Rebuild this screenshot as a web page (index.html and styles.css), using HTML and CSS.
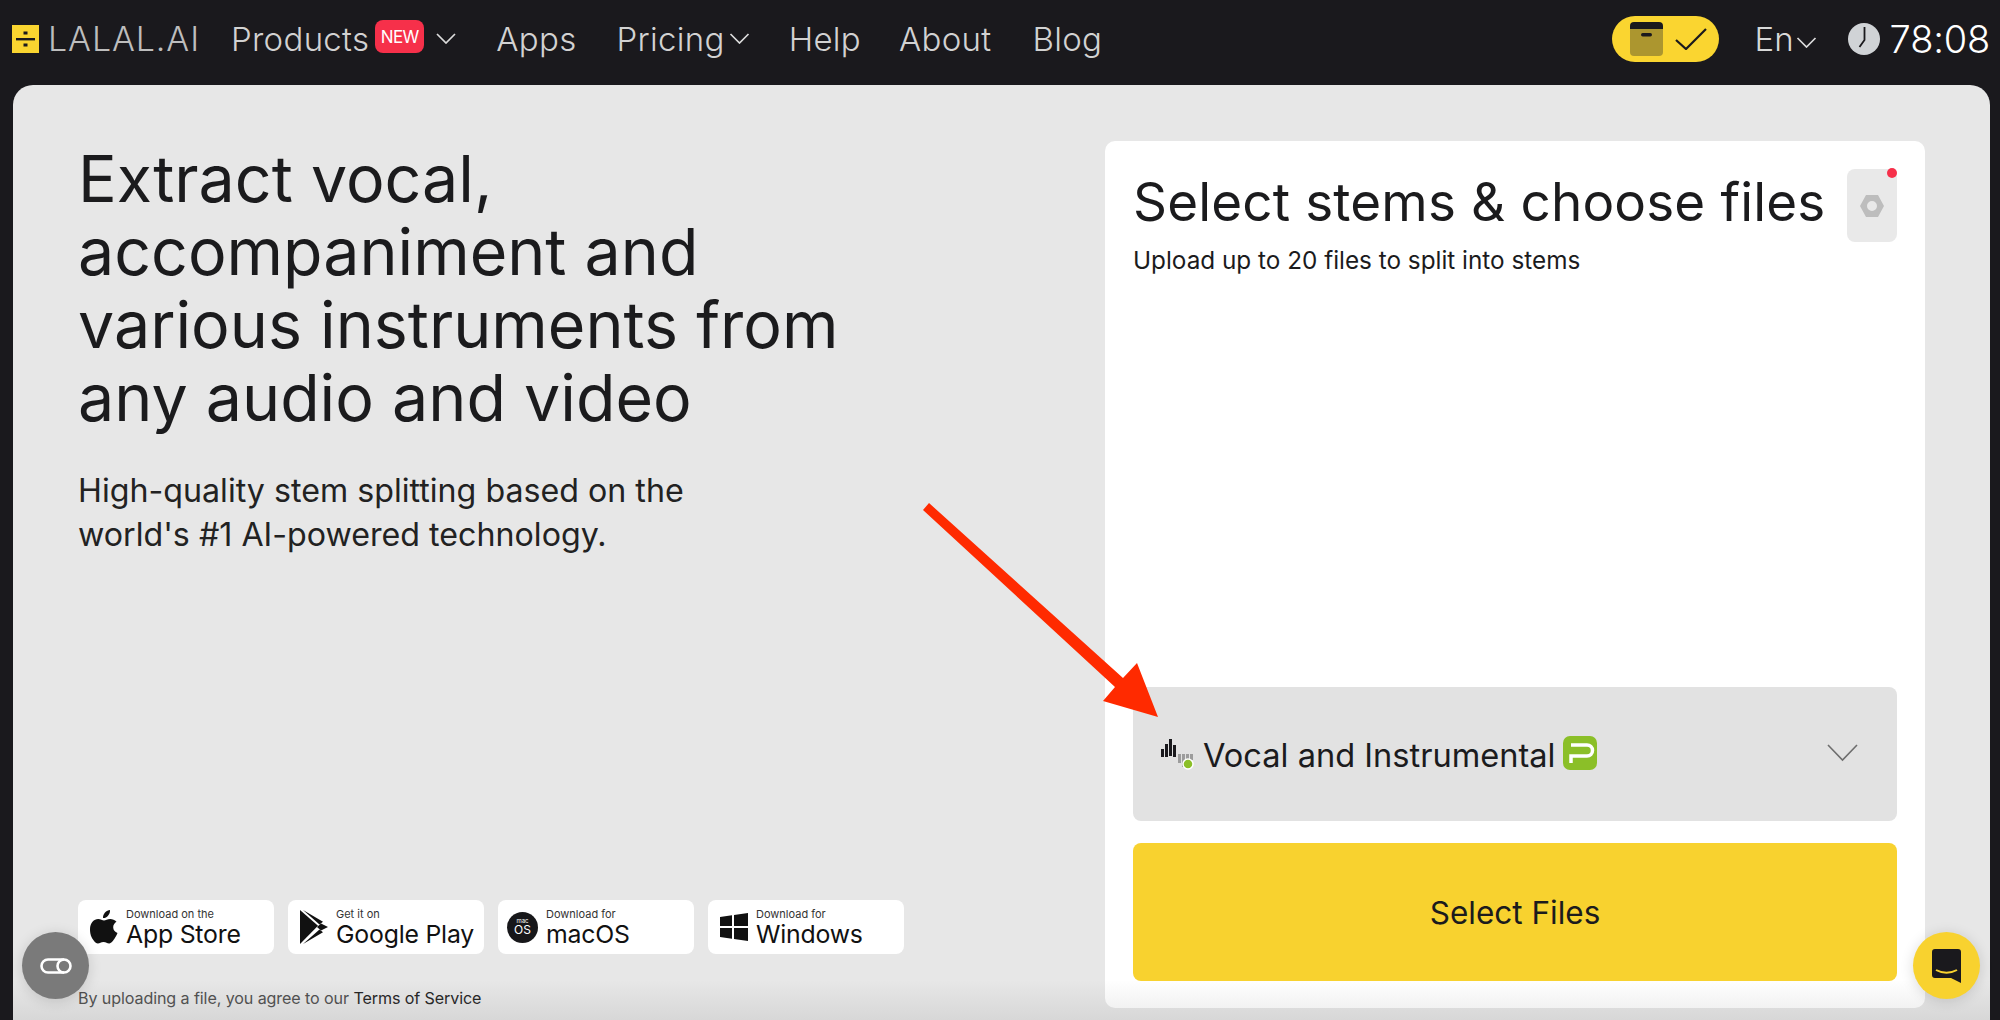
FILE: index.html
```html
<!DOCTYPE html>
<html lang="en">
<head>
<meta charset="utf-8">
<title>LALAL.AI</title>
<link rel="stylesheet" href="styles.css">
</head>
<body>
<header class="topbar">
  <nav class="nav-left">
    <a class="brand">
      <svg class="brand-mark" viewBox="0 0 27 28"><rect width="27" height="28" fill="#fad530"/><rect x="4" y="13" width="19" height="2.4" fill="#1a191d"/><rect x="11.5" y="6.5" width="4" height="3" fill="#1a191d"/><rect x="11.5" y="18.5" width="4" height="3" fill="#1a191d"/></svg>
      <span class="brand-name">LALAL.AI</span>
    </a>
    <a class="nav-item nav-products">Products<span class="badge-new">NEW</span>
      <svg class="chev chev-products" viewBox="0 0 20 11"><path d="M1 1l9 9 9-9" fill="none" stroke="#dcdcdc" stroke-width="1.7"/></svg></a>
    <a class="nav-item">Apps</a>
    <a class="nav-item nav-pricing">Pricing
      <svg class="chev chev-pricing" viewBox="0 0 20 11"><path d="M1 1l9 9 9-9" fill="none" stroke="#dcdcdc" stroke-width="1.7"/></svg></a>
    <a class="nav-item nav-help">Help</a>
    <a class="nav-item nav-about">About</a>
    <a class="nav-item">Blog</a>
  </nav>
  <div class="nav-right">
    <div class="pill">
      <svg class="pill-box" viewBox="0 0 33 34"><path d="M4 0h25a4 4 0 0 1 4 4v3H0V4a4 4 0 0 1 4-4z" fill="#1a191d"/><path d="M0 7h33v23a4 4 0 0 1-4 4H4a4 4 0 0 1-4-4z" fill="#ac962f"/><rect x="11" y="11" width="11" height="3.5" rx="1.7" fill="#1a191d"/></svg>
      <svg class="pill-check" viewBox="0 0 32 22"><path d="M1 12l10 9L31 1" fill="none" stroke="#1a191d" stroke-width="2.2"/></svg>
    </div>
    <a class="lang">En<svg class="chev chev-lang" viewBox="0 0 20 11"><path d="M1 1l9 9 9-9" fill="none" stroke="#dcdcdc" stroke-width="1.7"/></svg></a>
    <svg class="clock" viewBox="0 0 32 32"><circle cx="16" cy="16" r="16" fill="#d0d3d6"/><path d="M16.5 4v13l-5 7" fill="none" stroke="#1a191d" stroke-width="1.8"/></svg>
    <span class="timer">78:08</span>
  </div>
</header>

<main class="panel">
  <section class="intro">
    <div>
      <h1 class="headline">Extract vocal, accompaniment and various instruments from any audio and video</h1>
      <p class="lead">High-quality stem splitting based on the world's #1 AI-powered technology.</p>
    </div>
    <div class="intro-foot">
      <div class="stores">
        <a class="store">
          <svg class="store-icon" viewBox="0 0 28 34"><path d="M20 0c.2 2.300-.7 4.300-2 5.700-1.300 1.500-3.200 2.500-5 2.300-.2-2.100.8-4.200 2-5.600C16.300 1 18.400.1 20 0zM26.500 11.700c-2 1.300-3.300 3.200-3.300 5.500 0 2.700 1.700 4.800 4.300 5.800-.6 1.800-1.500 3.500-2.600 5.100-1.600 2.300-3.200 5.300-5.700 5.300-2.300 0-3-1.400-5.700-1.400s-3.500 1.400-5.700 1.400c-2.400 0-4.100-2.800-5.700-5.200C.2 25 0 21.500 0 19.300c0-6.300 4-10.200 8.200-10.200 2.400 0 4.200 1.500 5.800 1.500 1.500 0 3.500-1.600 6.300-1.600 2.100 0 4.500.9 6.200 2.700z" fill="#111"/></svg>
          <span class="store-text"><small class="store-small">Download on the</small><strong class="store-big">App Store</strong></span>
        </a>
        <a class="store">
          <svg class="store-icon" viewBox="0 0 28 34"><path d="M0 0l18 15.800L0 34z" fill="#111"/><path d="M3 0l16.500 14.500 3.500-2.800zM3 34l16.500-14.500 3.500 2.800z" fill="#111"/><path d="M21 13.500l7 3.500-7 3.500-4-3.500z" fill="#111"/></svg>
          <span class="store-text"><small class="store-small">Get it on</small><strong class="store-big">Google Play</strong></span>
        </a>
        <a class="store">
          <span class="macos"><span class="macos-top">mac</span><span class="macos-os">OS</span></span>
          <span class="store-text"><small class="store-small">Download for</small><strong class="store-big">macOS</strong></span>
        </a>
        <a class="store">
          <svg class="store-icon" viewBox="0 0 28 28"><path d="M0 4l12-1.700V13H0zM14 2l14-2v13H14zM0 15h12v10.700L0 24zM14 15h14v13l-14-2z" fill="#111"/></svg>
          <span class="store-text"><small class="store-small">Download for</small><strong class="store-big">Windows</strong></span>
        </a>
      </div>
      <p class="terms">By uploading a file, you agree to our <a class="terms-link">Terms of Service</a></p>
    </div>
  </section>

  <section class="card">
    <div class="card-head">
      <div>
        <h2 class="card-title">Select stems &amp; choose files</h2>
        <p class="card-sub">Upload up to 20 files to split into stems</p>
      </div>
      <button class="settings">
        <svg class="settings-icon" viewBox="0 0 24 22"><path fill-rule="evenodd" d="M6 0h12l6 11-6 11H6L0 11zM12 6a5 5 0 1 0 0 10 5 5 0 0 0 0-10z" fill="#bdbdbd"/></svg>
        <span class="settings-dot"></span>
      </button>
    </div>
    <div class="card-space"></div>
    <div class="stem-select">
      <svg class="stem-icon" viewBox="0 0 33 32"><g fill="#1a191d"><rect x="0" y="11" width="3" height="8"/><rect x="4" y="6" width="3" height="13"/><rect x="8" y="1" width="3" height="17"/><rect x="12" y="7" width="3" height="12"/></g><g fill="#9c9c9c"><rect x="17" y="16" width="3" height="9"/><rect x="21" y="16" width="3" height="13"/><rect x="25" y="16" width="3" height="7"/><rect x="29" y="16" width="3" height="6"/></g><circle cx="27" cy="26" r="5" fill="#8bbf28" stroke="#fff" stroke-width="1.500"/></svg>
      <span class="stem-label">Vocal and Instrumental</span>
      <svg class="stem-badge" viewBox="0 0 34 34"><rect width="34" height="34" rx="7" fill="#8bbf28"/><path d="M8 27V20h14M8 9h16a3.500 3.500 0 0 1 0 11h-3" fill="none" stroke="#fff" stroke-width="3.500"/></svg>
      <svg class="stem-chev" viewBox="0 0 31 18"><path d="M1 1l14.500 15L30 1" fill="none" stroke="#6e6e6e" stroke-width="1.600"/></svg>
    </div>
    <button class="select-files">Select Files</button>
  </section>

  <div class="bottom-fade"></div>
</main>

<svg class="annotation" viewBox="920 500 240 220"><polygon points="923,510 929,503 1123,678 1137,663 1158,717 1103,701 1115,687" fill="#ff2a00"/></svg>

<button class="float float-left"><svg class="float-left-icon" viewBox="0 0 36 18"><path d="M26 2.500H10a6.500 6.500 0 0 0 0 13h16" fill="none" stroke="#fff" stroke-width="2.600"/><circle cx="26" cy="9" r="6.500" fill="none" stroke="#fff" stroke-width="2.600"/></svg></button>
<button class="float float-right"><svg class="float-right-icon" viewBox="0 0 29 34"><path d="M3 0h23a3 3 0 0 1 3 3v31l-10-5H3a3 3 0 0 1-3-3V3a3 3 0 0 1 3-3z" fill="#1a191d"/><path d="M4 21c6 3.500 15 3.500 21 0" fill="none" stroke="#f8d22f" stroke-width="2"/></svg></button>
</body>
</html>
```
FILE: styles.css
```css
* { box-sizing: border-box; }
html, body { margin: 0; height: 1020px; overflow: hidden; }
body {
  background: #1a191d;
  font-family: "Inter", "Liberation Sans", sans-serif;
  color: #1a191d;
  display: flex;
  flex-direction: column;
  width: 2000px;
}
h1, h2, p { margin: 0; }

.topbar {
  height: 85px;
  flex: none;
  display: flex;
  align-items: center;
  justify-content: space-between;
  padding: 0 10px 8px 12px;
}
.nav-left { display: flex; align-items: center; }
.nav-right { display: flex; align-items: center; }
.brand { display: flex; align-items: center; margin-right: 31px; }
.brand-mark { width: 27px; height: 28px; margin-right: 9px; }
.brand-name { font-size: 34px; font-weight: 300; color: #bdbdbd; letter-spacing: .9px; }
.nav-item {
  font-size: 33px;
  font-weight: 300;
  color: #d2d2d2;
  margin-right: 40px;
  letter-spacing: .3px;
  display: flex;
  align-items: center;
}
.badge-new {
  background: #f6304a;
  color: #fff;
  font-size: 17px;
  font-weight: 400;
  width: 49px;
  height: 33px;
  border-radius: 8px;
  margin-left: 6px;
  display: flex;
  align-items: center;
  justify-content: center;
  letter-spacing: -.6px;
  position: relative;
  top: -2px;
}
.chev { display: block; }
.chev-products { width: 20px; height: 11px; margin-left: 12px; }
.chev-pricing { width: 21px; height: 11px; margin-left: 4px; }
.nav-pricing { margin-right: 39px; }
.nav-help { margin-right: 38px; }
.nav-about { margin-right: 41px; }
.pill {
  width: 107px;
  height: 46px;
  background: #fad530;
  border-radius: 23px;
  display: flex;
  align-items: center;
  padding-left: 18px;
  margin-right: 36px;
}
.pill-box { width: 33px; height: 34px; margin-right: 12px; }
.pill-check { width: 32px; height: 22px; }
.lang { font-size: 33px; font-weight: 300; color: #d8d8d8; display: flex; align-items: center; margin-right: 31px; }
.chev-lang { width: 21px; height: 11px; margin-left: 2px; margin-top: 8px; }
.clock { width: 32px; height: 32px; margin-right: 10px; }
.timer { font-size: 38px; font-weight: 300; color: #fff; letter-spacing: -.2px; }

.panel {
  position: relative;
  flex: 1;
  width: 1977px;
  margin-left: 13px;
  background: #e7e7e7;
  border-radius: 20px 20px 0 0;
  display: flex;
  justify-content: space-between;
  padding: 56px 65px 12px 65px;
}
.intro { display: flex; flex-direction: column; justify-content: space-between; width: 900px; }
.headline {
  font-size: 64.5px;
  font-weight: 400;
  line-height: 73px;
  width: 830px;
  margin-top: 2px;
  color: #1b1b1d;
}
.lead { font-size: 32.2px; line-height: 44px; margin-top: 34px; width: 680px; font-weight: 400; color: #222; }
.intro-foot { padding-bottom: 0; }
.stores { display: flex; gap: 14px; }
.store {
  width: 196px;
  height: 54px;
  background: #fff;
  border-radius: 8px;
  display: flex;
  align-items: center;
  padding-left: 12px;
}
.store-icon { width: 28px; height: 34px; margin-right: 8px; flex: none; }
.store-text { display: flex; flex-direction: column; }
.store-small { font-size: 11px; line-height: 13px; color: #333; }
.store-big { font-size: 24.8px; line-height: 26px; font-weight: 400; color: #111; letter-spacing: -.2px; }
.macos {
  width: 31px;
  height: 31px;
  border-radius: 50%;
  background: #17171a;
  color: #fff;
  margin-left: -3px;
  margin-right: 8px;
  flex: none;
  display: flex;
  flex-direction: column;
  align-items: center;
  justify-content: center;
}
.macos-top { font-size: 6px; line-height: 6px; }
.macos-os { font-size: 12px; line-height: 12px; }
.terms { font-size: 16.1px; line-height: 20px; color: #4e4e4e; margin-top: 34px; letter-spacing: -.1px; }
.terms-link { color: #222; }

.card {
  width: 820px;
  background: #fff;
  border-radius: 10px;
  padding: 28px 28px 27px;
  display: flex;
  flex-direction: column;
}
.card-head { display: flex; justify-content: space-between; }
.card-title { font-size: 53px; line-height: 66px; font-weight: 400; letter-spacing: .15px; color: #1b1b1d; }
.card-sub { font-size: 24.3px; line-height: 30px; margin-top: 10px; color: #1b1b1d; }
.settings {
  position: relative;
  width: 50px;
  height: 73px;
  border: 0;
  padding: 0;
  background: #e9e9e9;
  border-radius: 8px;
  display: flex;
  align-items: center;
  justify-content: center;
}
.settings-icon { width: 24px; height: 22px; }
.settings-dot { position: absolute; top: -1px; right: 0; width: 10px; height: 10px; border-radius: 50%; background: #f6304a; }
.card-space { flex: 1; }
.stem-select {
  height: 134px;
  background: #e2e2e2;
  border-radius: 8px;
  display: flex;
  align-items: center;
  padding: 0 30px 0 28px;
}
.stem-icon { width: 33px; height: 32px; margin-right: 9px; flex: none; }
.stem-label { font-size: 32.6px; color: #1b1b1d; position: relative; top: 1px; }
.stem-badge { width: 34px; height: 34px; margin-left: 8px; margin-bottom: 2px; }
.stem-chev { width: 31px; height: 18px; margin-left: auto; margin-right: 9px; margin-bottom: 2px; }
.select-files {
  margin-top: 22px;
  height: 138px;
  border: 0;
  border-radius: 8px;
  background: #f8d22f;
  font: 400 31.5px "Inter", "Liberation Sans", sans-serif;
  color: #1b1b1d;
}
.bottom-fade {
  position: absolute;
  left: 0;
  right: 0;
  bottom: 0;
  height: 40px;
  background: linear-gradient(to bottom, rgba(120,120,120,0), rgba(120,120,120,.14));
  pointer-events: none;
}
.annotation { position: absolute; left: 920px; top: 500px; width: 240px; height: 220px; pointer-events: none; }
.float {
  position: absolute;
  top: 932px;
  width: 67px;
  height: 67px;
  border: 0;
  padding: 0;
  border-radius: 50%;
  display: flex;
  align-items: center;
  justify-content: center;
  box-shadow: 0 2px 14px rgba(0,0,0,.14);
}
.float-left { left: 22px; background: #7a7a7a; }
.float-left-icon { width: 36px; height: 18px; }
.float-right { left: 1913px; background: #f8d22f; }
.float-right-icon { width: 29px; height: 34px; margin-left: 0; }
```
